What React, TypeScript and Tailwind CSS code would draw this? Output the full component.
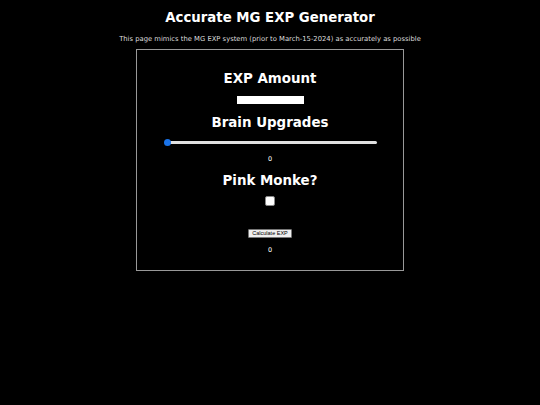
export default function App() {
  return (
    <div className="min-h-[405px] bg-black text-white font-['DejaVu_Sans',Verdana,sans-serif] flex flex-col items-center">
      <h1 className="mt-[10px] text-[13.3px] leading-[16px] font-bold">Accurate MG EXP Generator</h1>
      <p className="mt-[9px] text-[6.8px] leading-[9px] text-[#ddd]">
        This page mimics the MG EXP system (prior to March-15-2024) as accurately as possible
      </p>

      <div className="mt-[5px] w-[268px] h-[222px] border border-[#999] flex flex-col items-center">
        <h2 className="mt-[21px] text-[13.4px] leading-[16px] font-bold">EXP Amount</h2>
        <div className="mt-[9px] w-[67px] h-[8px] bg-white" />

        <h2 className="mt-[11px] text-[13.4px] leading-[16px] font-bold">Brain Upgrades</h2>
        {/* slider */}
        <div className="mt-[8px] relative w-[213px] h-[7px] flex items-center">
          <div className="ml-[3px] w-full h-[3px] rounded-full bg-[#e0e0e0]" />
          <div className="absolute left-0 top-0 w-[7px] h-[7px] rounded-full bg-[#1a73e8]" />
        </div>
        <div className="mt-[9px] text-[6.5px] leading-[8px] text-white">0</div>

        <h2 className="mt-[10px] text-[13.4px] leading-[16px] font-bold">Pink Monke?</h2>
        <div className="mt-[7px] w-[10px] h-[10px] rounded-[2px] bg-white border border-[#888]" />

        <button className="mt-[23px] px-[3px] h-[9px] bg-[#efefef] border border-[#767676] rounded-[1px] text-black text-[5.5px] leading-[7px] font-['Liberation_Sans',Arial,sans-serif]">
          Calculate EXP
        </button>
        <div className="mt-[8px] text-[6.5px] leading-[8px] text-white">0</div>
      </div>
    </div>
  )
}
